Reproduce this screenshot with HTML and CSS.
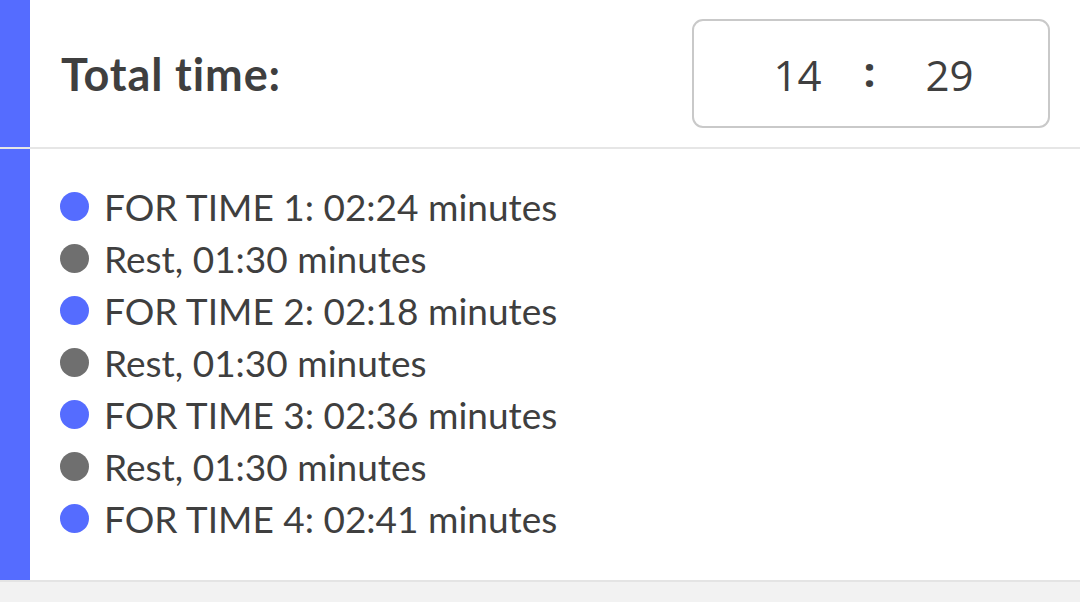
FILE: index.html
```html
<!DOCTYPE html>
<html>
<head>
<meta charset="utf-8">
<link rel="stylesheet" href="styles.css">
</head>
<body>
<div class="card">
  <div class="row header-row">
    <div class="bar"></div>
    <div class="header">
      <div class="title">Total time:</div>
      <div class="timer">
        <span class="num">14</span>
        <span class="colon">:</span>
        <span class="num">29</span>
      </div>
    </div>
  </div>
  <div class="row list-row">
    <div class="bar"></div>
    <ul class="list">
      <li><span class="dot work"></span>FOR TIME 1: 02:24 minutes</li>
      <li><span class="dot rest"></span>Rest, 01:30 minutes</li>
      <li><span class="dot work"></span>FOR TIME 2: 02:18 minutes</li>
      <li><span class="dot rest"></span>Rest, 01:30 minutes</li>
      <li><span class="dot work"></span>FOR TIME 3: 02:36 minutes</li>
      <li><span class="dot rest"></span>Rest, 01:30 minutes</li>
      <li><span class="dot work"></span>FOR TIME 4: 02:41 minutes</li>
    </ul>
  </div>
</div>
</body>
</html>
```
FILE: styles.css
```css
html, body {
  margin: 0;
  padding: 0;
  background: #f2f2f2;
  width: 1080px;
  height: 602px;
  overflow: hidden;
}
.card {
  background: #ffffff;
  border-bottom: 2px solid #e4e4e4;
  display: flex;
  flex-direction: column;
}
.row {
  display: flex;
}
.bar {
  width: 30px;
  flex: none;
  background: #556cff;
}
.header-row {
  height: 147px;
  border-bottom: 2px solid #e6e6e6;
}
.list-row {
  height: 431px;
}
.header {
  flex: 1;
  display: flex;
  align-items: center;
  justify-content: space-between;
  padding: 0 30px 0 31px;
}
.title {
  font-family: "Lato", sans-serif;
  font-weight: 700;
  font-size: 45px;
  letter-spacing: 0.9px;
  color: #3f3f3f;
}
.timer {
  flex: none;
  box-sizing: border-box;
  width: 358px;
  height: 109px;
  border: 2px solid #c9c9c9;
  border-radius: 11px;
  display: flex;
  align-items: center;
  justify-content: center;
  gap: 42px;
  font-family: "Open Sans", sans-serif;
  font-size: 42px;
  color: #3f3f3f;
  padding: 2px 0 0 5px;
}
.colon {
  font-weight: 700;
  position: relative;
  top: -4px;
  margin-right: 8px;
}
.list {
  list-style: none;
  margin: 0;
  padding: 31px 0 0 30px;
  font-family: "Lato", sans-serif;
  font-size: 37px;
  color: #3f3f3f;
}
.list li {
  display: flex;
  align-items: center;
  height: 52px;
}
.dot {
  width: 29px;
  height: 29px;
  border-radius: 50%;
  margin-right: 15px;
  flex: none;
}
.dot.work { background: #556cff; }
.dot.rest { background: #6f6f6f; }
```
